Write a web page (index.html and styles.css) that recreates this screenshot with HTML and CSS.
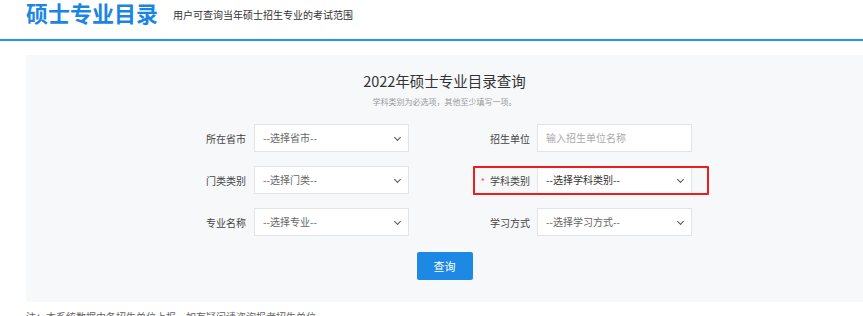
FILE: index.html
```html
<!DOCTYPE html>
<html>
<head>
    <meta charset="UTF-8">
    <title>硕士专业目录</title>
    <link rel="stylesheet" href="styles.css">
</head>
<body>
    <div class="header">
        <h1 class="title">硕士专业目录</h1>
        <span class="subtitle">用户可查询当年硕士招生专业的考试范围</span>
    </div>

    <div class="panel">
        <h2 class="panel-title">2022年硕士专业目录查询</h2>
        <p class="panel-tip">学科类别为必选项，其他至少填写一项。</p>

        <div class="form">
            <div class="field left">
                <label>所在省市</label>
                <div class="control">--选择省市--<span class="arrow"></span></div>
            </div>
            <div class="field right">
                <label>招生单位</label>
                <div class="control input">输入招生单位名称</div>
            </div>
            <div class="field left">
                <label>门类类别</label>
                <div class="control">--选择门类--<span class="arrow"></span></div>
            </div>
            <div class="field right marked">
                <label><span class="req">*</span>学科类别</label>
                <div class="control dark">--选择学科类别--<span class="arrow"></span></div>
            </div>
            <div class="field left">
                <label>专业名称</label>
                <div class="control">--选择专业--<span class="arrow"></span></div>
            </div>
            <div class="field right">
                <label>学习方式</label>
                <div class="control">--选择学习方式--<span class="arrow"></span></div>
            </div>
        </div>

        <div class="actions">
            <button class="btn">查询</button>
        </div>
    </div>

    <p class="note">注：本系统数据由各招生单位上报，如有疑问请咨询报考招生单位。</p>
</body>
</html>
```

FILE: styles.css
```css
body {
    margin: 0;
    font-family: "Noto Sans CJK SC", "Noto Sans", sans-serif;
    background: #fff;
    color: #333;
    overflow: hidden;
}
.header {
    height: 39px;
    border-bottom: 2px solid #2196f3;
    display: flex;
    align-items: flex-start;
    padding-left: 26px;
}
.title {
    margin: 0;
    font-size: 22px;
    line-height: 24px;
    font-weight: bold;
    color: #1a86e2;
}
.subtitle {
    font-size: 10px;
    line-height: 12px;
    color: #333;
    margin: 9px 0 0 15px;
}
.panel {
    margin: 14px 0 0 26px;
    background: #f7f8fa;
    padding: 16px 0 22px;
    text-align: center;
}
.panel-title {
    margin: 0;
    font-size: 14.5px;
    line-height: 20px;
    font-weight: normal;
    color: #333;
}
.panel-tip {
    margin: 5px 0 0;
    font-size: 8px;
    line-height: 12px;
    color: #999;
}
.form {
    display: grid;
    grid-template-columns: 223px 275px;
    column-gap: 8px;
    row-gap: 14px;
    margin: 16px 0 0 160px;
    text-align: left;
}
.field {
    display: flex;
    align-items: center;
    position: relative;
}
.field label {
    font-size: 10px;
    color: #444;
    text-align: right;
    flex: none;
}
.field.left label {
    width: 60px;
    margin-right: 8px;
}
.field.right label {
    width: 113px;
    margin-right: 7px;
}
.req {
    color: #f5504a;
    font-size: 9px;
    margin-right: 5px;
}
.field.marked::after {
    content: "";
    position: absolute;
    left: 56px;
    right: -17px;
    top: 0;
    bottom: -1px;
    border: 2px solid #ee1c1c;
    border-radius: 1px;
}
.control {
    width: 155px;
    height: 28px;
    box-sizing: border-box;
    background: #fff;
    border: 1px solid #e2e4e8;
    font-size: 10px;
    line-height: 26px;
    color: #666;
    padding-left: 8px;
    position: relative;
}
.control.dark {
    color: #333;
}
.control.input {
    color: #aaa;
}
.arrow {
    position: absolute;
    right: 8px;
    top: 10px;
    width: 4px;
    height: 4px;
    border-right: 1.3px solid #555;
    border-bottom: 1.3px solid #555;
    transform: rotate(45deg);
}
.actions {
    margin-top: 16px;
}
.btn {
    width: 56px;
    height: 28px;
    border: none;
    border-radius: 2px;
    background: #1e88e5;
    color: #fff;
    font-family: inherit;
    font-size: 11px;
    cursor: pointer;
}
.note {
    margin: 8px 0 0 26px;
    font-size: 10px;
    line-height: 14px;
    color: #666;
}
```
